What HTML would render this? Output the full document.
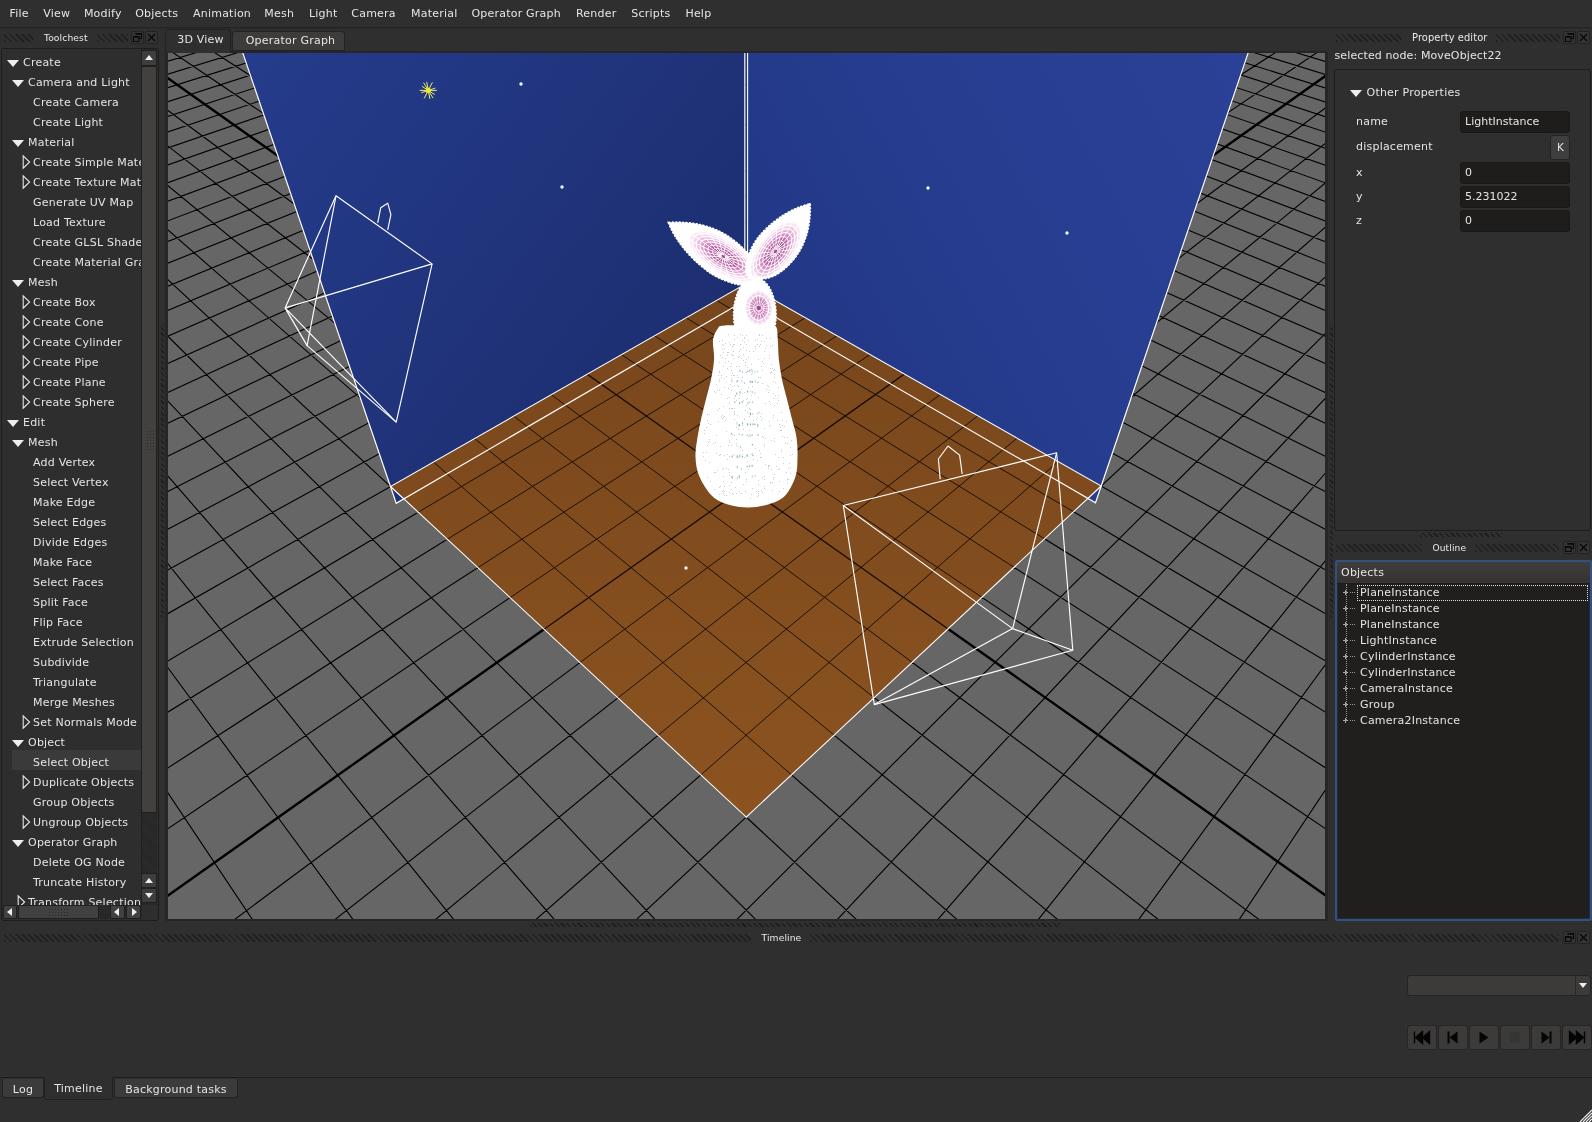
<!DOCTYPE html><html><head><meta charset="utf-8"><title>3D Editor</title><style>
*{box-sizing:border-box;margin:0;padding:0}
html,body{width:1592px;height:1122px;overflow:hidden;background:#2f2f2f}
#app{position:absolute;left:0;top:0;width:1592px;height:1122px;will-change:transform}
body{font-family:"DejaVu Sans","Liberation Sans",sans-serif;font-size:11px;color:#e4e4e4;position:relative;letter-spacing:.22px;-webkit-font-smoothing:antialiased}
.abs{position:absolute}
.t{position:absolute;white-space:pre;line-height:14px;height:14px}
.menubar{position:absolute;left:0;top:0;width:1592px;height:28px;background:#2f2f2f;border-bottom:1px solid #242424;box-shadow:0 2px 0 -1px #2a2a2a}
.menubar span{position:absolute;top:7px;line-height:14px;white-space:pre}
.hatch{position:absolute;height:7.5px;background:repeating-linear-gradient(45deg,#212121 0 2px,transparent 2px 4.3px);opacity:.95}
.title{position:absolute;font-size:9px;letter-spacing:.1px;line-height:12px;white-space:pre;color:#e8e8e8}
.tb{position:absolute;width:13px;height:13px;border:1px solid #222;border-radius:2px;background:#343434}
.tb svg{position:absolute;left:0;top:0}
.frame{position:absolute;border:1px solid #1d1d1d;border-radius:3px;background:#2e2e2e}
.tree{position:absolute;left:2px;top:49px;width:139px;height:856px;overflow:hidden;background:#2e2e2e}
.tree .r{position:absolute;left:0;width:200px;height:20px;line-height:20px;white-space:pre}
.tree .r b{font-weight:normal;position:absolute;top:0}
.arrD{position:absolute;width:0;height:0;border-left:6.5px solid transparent;border-right:6.5px solid transparent;border-top:7px solid #eee}
.sbtn{position:absolute;background:#434140;border:1px solid #1f1f1f;border-radius:2px}
.field{position:absolute;left:1460px;width:110px;height:22px;background:#1f1d1c;border:1px solid #1a1817;border-radius:3px;line-height:19px;padding-left:4px;white-space:pre;letter-spacing:0}
.tab{position:absolute;border:1px solid #222;border-radius:3px 3px 0 0;background:#3b3b3b;white-space:pre;text-align:center}
.mbtn{position:absolute;top:1024.5px;width:30px;height:25px;background:#3d3b3a;border:1px solid #262626;border-radius:3px}
.vp{position:absolute;left:168px;top:53px;display:block}
.oi{position:absolute;left:1360px;line-height:16px;height:16px;white-space:pre}
</style></head><body><div id="app">
<div class="menubar"><span style="left:9.5px">File</span><span style="left:43.2px">View</span><span style="left:83.9px">Modify</span><span style="left:135.2px">Objects</span><span style="left:193.0px">Animation</span><span style="left:264.3px">Mesh</span><span style="left:309.0px">Light</span><span style="left:351.3px">Camera</span><span style="left:411.0px">Material</span><span style="left:471.4px">Operator Graph</span><span style="left:575.9px">Render</span><span style="left:631.2px">Scripts</span><span style="left:685.4px">Help</span></div>
<div class="hatch" style="left:4px;top:34px;width:30px"></div><div class="hatch" style="left:97px;top:34px;width:31px"></div><div class="title" style="left:44.0px;top:32px;font-size:9.2px">Toolchest</div><div class="tb" style="left:130.5px;top:30.5px"><svg width="11" height="11" viewBox="0 0 11 11"><path d="M3.5 1.5h6v5h-2.5M1.5 4.5h5.5v5h-5.5z" fill="none" stroke="#0a0a0a" stroke-width="1.2"/><path d="M3.5 2h6M1.5 5h5.5" stroke="#0a0a0a" stroke-width="1.6"/></svg></div><div class="tb" style="left:144.5px;top:30.5px"><svg width="11" height="11" viewBox="0 0 11 11"><path d="M2 2l7 7M9 2l-7 7" stroke="#0a0a0a" stroke-width="1.5"/></svg></div>
<div class="frame" style="left:1px;top:48px;width:158px;height:873px"></div>
<div class="tree">
<div class="r" style="top:4px"><i class="arrD" style="left:5px;top:7px"></i><b style="left:21px">Create</b></div>
<div class="r" style="top:24px"><i class="arrD" style="left:10px;top:7px"></i><b style="left:26px">Camera and Light</b></div>
<div class="r" style="top:44px"><b style="left:31px">Create Camera</b></div>
<div class="r" style="top:64px"><b style="left:31px">Create Light</b></div>
<div class="r" style="top:84px"><i class="arrD" style="left:10px;top:7px"></i><b style="left:26px">Material</b></div>
<div class="r" style="top:104px"><svg style="position:absolute;left:19px;top:1px" width="10" height="16" viewBox="0 0 10 16"><path d="M2.2 1.8L8.6 8 2.2 14.2z" fill="none" stroke="#eee" stroke-width="1.05"/></svg><b style="left:31px">Create Simple Material</b></div>
<div class="r" style="top:124px"><svg style="position:absolute;left:19px;top:1px" width="10" height="16" viewBox="0 0 10 16"><path d="M2.2 1.8L8.6 8 2.2 14.2z" fill="none" stroke="#eee" stroke-width="1.05"/></svg><b style="left:31px">Create Texture Material</b></div>
<div class="r" style="top:144px"><b style="left:31px">Generate UV Map</b></div>
<div class="r" style="top:164px"><b style="left:31px">Load Texture</b></div>
<div class="r" style="top:184px"><b style="left:31px">Create GLSL Shader</b></div>
<div class="r" style="top:204px"><b style="left:31px">Create Material Graph</b></div>
<div class="r" style="top:224px"><i class="arrD" style="left:10px;top:7px"></i><b style="left:26px">Mesh</b></div>
<div class="r" style="top:244px"><svg style="position:absolute;left:19px;top:1px" width="10" height="16" viewBox="0 0 10 16"><path d="M2.2 1.8L8.6 8 2.2 14.2z" fill="none" stroke="#eee" stroke-width="1.05"/></svg><b style="left:31px">Create Box</b></div>
<div class="r" style="top:264px"><svg style="position:absolute;left:19px;top:1px" width="10" height="16" viewBox="0 0 10 16"><path d="M2.2 1.8L8.6 8 2.2 14.2z" fill="none" stroke="#eee" stroke-width="1.05"/></svg><b style="left:31px">Create Cone</b></div>
<div class="r" style="top:284px"><svg style="position:absolute;left:19px;top:1px" width="10" height="16" viewBox="0 0 10 16"><path d="M2.2 1.8L8.6 8 2.2 14.2z" fill="none" stroke="#eee" stroke-width="1.05"/></svg><b style="left:31px">Create Cylinder</b></div>
<div class="r" style="top:304px"><svg style="position:absolute;left:19px;top:1px" width="10" height="16" viewBox="0 0 10 16"><path d="M2.2 1.8L8.6 8 2.2 14.2z" fill="none" stroke="#eee" stroke-width="1.05"/></svg><b style="left:31px">Create Pipe</b></div>
<div class="r" style="top:324px"><svg style="position:absolute;left:19px;top:1px" width="10" height="16" viewBox="0 0 10 16"><path d="M2.2 1.8L8.6 8 2.2 14.2z" fill="none" stroke="#eee" stroke-width="1.05"/></svg><b style="left:31px">Create Plane</b></div>
<div class="r" style="top:344px"><svg style="position:absolute;left:19px;top:1px" width="10" height="16" viewBox="0 0 10 16"><path d="M2.2 1.8L8.6 8 2.2 14.2z" fill="none" stroke="#eee" stroke-width="1.05"/></svg><b style="left:31px">Create Sphere</b></div>
<div class="r" style="top:364px"><i class="arrD" style="left:5px;top:7px"></i><b style="left:21px">Edit</b></div>
<div class="r" style="top:384px"><i class="arrD" style="left:10px;top:7px"></i><b style="left:26px">Mesh</b></div>
<div class="r" style="top:404px"><b style="left:31px">Add Vertex</b></div>
<div class="r" style="top:424px"><b style="left:31px">Select Vertex</b></div>
<div class="r" style="top:444px"><b style="left:31px">Make Edge</b></div>
<div class="r" style="top:464px"><b style="left:31px">Select Edges</b></div>
<div class="r" style="top:484px"><b style="left:31px">Divide Edges</b></div>
<div class="r" style="top:504px"><b style="left:31px">Make Face</b></div>
<div class="r" style="top:524px"><b style="left:31px">Select Faces</b></div>
<div class="r" style="top:544px"><b style="left:31px">Split Face</b></div>
<div class="r" style="top:564px"><b style="left:31px">Flip Face</b></div>
<div class="r" style="top:584px"><b style="left:31px">Extrude Selection</b></div>
<div class="r" style="top:604px"><b style="left:31px">Subdivide</b></div>
<div class="r" style="top:624px"><b style="left:31px">Triangulate</b></div>
<div class="r" style="top:644px"><b style="left:31px">Merge Meshes</b></div>
<div class="r" style="top:664px"><svg style="position:absolute;left:19px;top:1px" width="10" height="16" viewBox="0 0 10 16"><path d="M2.2 1.8L8.6 8 2.2 14.2z" fill="none" stroke="#eee" stroke-width="1.05"/></svg><b style="left:31px">Set Normals Mode</b></div>
<div class="r" style="top:684px"><i class="arrD" style="left:10px;top:7px"></i><b style="left:26px">Object</b></div>
<div class="abs" style="left:10px;top:701px;width:129px;height:20px;background:#3a3a3a"></div><div class="r" style="top:704px"><b style="left:31px">Select Object</b></div>
<div class="r" style="top:724px"><svg style="position:absolute;left:19px;top:1px" width="10" height="16" viewBox="0 0 10 16"><path d="M2.2 1.8L8.6 8 2.2 14.2z" fill="none" stroke="#eee" stroke-width="1.05"/></svg><b style="left:31px">Duplicate Objects</b></div>
<div class="r" style="top:744px"><b style="left:31px">Group Objects</b></div>
<div class="r" style="top:764px"><svg style="position:absolute;left:19px;top:1px" width="10" height="16" viewBox="0 0 10 16"><path d="M2.2 1.8L8.6 8 2.2 14.2z" fill="none" stroke="#eee" stroke-width="1.05"/></svg><b style="left:31px">Ungroup Objects</b></div>
<div class="r" style="top:784px"><i class="arrD" style="left:10px;top:7px"></i><b style="left:26px">Operator Graph</b></div>
<div class="r" style="top:804px"><b style="left:31px">Delete OG Node</b></div>
<div class="r" style="top:824px"><b style="left:31px">Truncate History</b></div>
<div class="r" style="top:844px"><svg style="position:absolute;left:14px;top:1px" width="10" height="16" viewBox="0 0 10 16"><path d="M2.2 1.8L8.6 8 2.2 14.2z" fill="none" stroke="#eee" stroke-width="1.05"/></svg><b style="left:26px">Transform Selection</b></div>
</div>
<div class="abs" style="left:141px;top:49px;width:16px;height:856px;background:repeating-linear-gradient(45deg,#262626 0 1px,#2b2b2b 1px 2px);border-left:1px solid #1f1f1f"></div>
<div class="sbtn" style="left:141px;top:50px;width:16px;height:16px;background:#403e3d"><i class="abs" style="left:3px;top:4px;border-left:4px solid transparent;border-right:4px solid transparent;border-bottom:5px solid #eee"></i></div>
<div class="sbtn" style="left:141px;top:66px;width:16px;height:747px;background:#434140"></div>
<div class="abs" style="left:146px;top:430px;width:8px;height:20px;background:radial-gradient(circle,#2a2a2a 0.8px,transparent 1px) 0 0/3px 3px"></div>
<div class="sbtn" style="left:141px;top:873px;width:16px;height:15px;background:#403e3d"><i class="abs" style="left:3px;top:4px;border-left:4px solid transparent;border-right:4px solid transparent;border-bottom:5px solid #eee"></i></div>
<div class="sbtn" style="left:141px;top:888px;width:16px;height:15px;background:#403e3d"><i class="abs" style="left:3px;top:4px;border-left:4px solid transparent;border-right:4px solid transparent;border-top:5px solid #eee"></i></div>
<div class="abs" style="left:2px;top:905px;width:140px;height:14px;background:repeating-linear-gradient(45deg,#262626 0 1px,#2b2b2b 1px 2px)"></div>
<div class="sbtn" style="left:3px;top:905px;width:14px;height:14px"><i class="abs" style="left:3px;top:2px;border-top:4px solid transparent;border-bottom:4px solid transparent;border-right:5px solid #eee"></i></div>
<div class="sbtn" style="left:18px;top:905px;width:81px;height:14px;background:#434140"></div>
<div class="abs" style="left:48px;top:908px;width:20px;height:8px;background:radial-gradient(circle,#2a2a2a 0.8px,transparent 1px) 0 0/3px 3px"></div>
<div class="sbtn" style="left:110px;top:905px;width:15px;height:14px"><i class="abs" style="left:3px;top:2px;border-top:4px solid transparent;border-bottom:4px solid transparent;border-right:5px solid #eee"></i></div>
<div class="sbtn" style="left:126px;top:905px;width:15px;height:14px"><i class="abs" style="left:5px;top:2px;border-top:4px solid transparent;border-bottom:4px solid transparent;border-left:5px solid #eee"></i></div>
<div class="abs" style="left:160.5px;top:324px;width:3.5px;height:293px;background:repeating-linear-gradient(45deg,#1f1f1f 0 1.6px,transparent 1.6px 4px)"></div>
<div class="abs" style="left:1329.8px;top:324px;width:3.5px;height:293px;background:repeating-linear-gradient(45deg,#1f1f1f 0 1.6px,transparent 1.6px 4px)"></div>
<div class="abs" style="left:165px;top:51px;width:1163px;height:870px;background:#262626;border-radius:2px"></div>
<div class="tab" style="left:165px;top:29px;width:66px;height:24px;background:#2f2f2f;border-bottom:none;line-height:19px;padding-left:5px">3D View</div>
<div class="tab" style="left:232px;top:31px;width:113px;height:20px;line-height:17px;padding-left:4px;background:#3e3c3a">Operator Graph</div>
<svg class="vp" width="1157" height="866" viewBox="0 0 1157 866">
<defs>
<linearGradient id="gl" gradientUnits="userSpaceOnUse" x1="80" y1="0" x2="520" y2="330"><stop offset="0" stop-color="#253c8c"/><stop offset="1" stop-color="#1d2e70"/></linearGradient>
<linearGradient id="gr" gradientUnits="userSpaceOnUse" x1="1080" y1="0" x2="600" y2="260"><stop offset="0" stop-color="#2a4197"/><stop offset="0.55" stop-color="#273d90"/><stop offset="1" stop-color="#223785"/></linearGradient>
<linearGradient id="gf" gradientUnits="userSpaceOnUse" x1="0" y1="230" x2="0" y2="765"><stop offset="0" stop-color="#77461c"/><stop offset="1" stop-color="#8c5320"/></linearGradient>
<radialGradient id="gp" cx="0.5" cy="0.5" r="0.5"><stop offset="0" stop-color="#a04088"/><stop offset="0.28" stop-color="#ac4e96"/><stop offset="0.5" stop-color="#d68cc3"/><stop offset="0.74" stop-color="#f3d0e9"/><stop offset="0.95" stop-color="#fff"/></radialGradient>
<clipPath id="cf"><polygon points="578.2,764.1 222.5,433.5 577.7,230.8 933.2,433.0"/></clipPath>
</defs>
<rect width="1157" height="866" fill="#666"/>
<path d="M577.3 -280.9L-2627.2 435.5M577.3 -280.9L3769.2 431.0M588.6 -278.3L-2669.8 461.4M566.0 -278.3L3811.5 456.7M600.1 -275.8L-2714.6 488.5M554.5 -275.8L3856.0 483.6M611.8 -273.2L-2761.7 517.1M542.9 -273.2L3902.7 512.0M623.6 -270.5L-2811.3 547.1M531.0 -270.5L3951.9 541.8M635.7 -267.8L-2863.7 578.8M519.0 -267.8L4003.8 573.3M647.9 -265.1L-2919.0 612.3M506.8 -265.1L4058.6 606.6M660.3 -262.4L-2977.4 647.8M494.3 -262.3L4116.6 641.8M672.9 -259.5L-3039.4 685.3M481.7 -259.5L4178.1 679.0M685.8 -256.7L-3105.2 725.2M468.9 -256.6L4243.3 718.6M698.8 -253.8L-3175.2 767.6M455.8 -253.7L4312.6 760.6M712.1 -250.8L-3249.7 812.8M442.6 -250.7L4386.5 805.5M725.5 -247.8L-3329.3 861.0M429.1 -247.7L4465.4 853.3M739.2 -244.7L-3414.5 912.7M415.4 -244.7L4549.7 904.5M753.2 -241.6L-3505.9 968.0M401.5 -241.6L4640.2 959.4M767.4 -238.5L-3604.2 1027.6M387.3 -238.4L4737.5 1018.4M781.8 -235.3L-3710.2 1091.8M372.9 -235.2L4842.4 1082.0M796.4 -232.0L-3824.8 1161.3M358.2 -231.9L4955.9 1150.8M811.4 -228.7L-3949.3 1236.7M343.3 -228.5L5078.9 1225.5M826.6 -225.3L-4084.7 1318.8M328.1 -225.1L5212.8 1306.7M842.0 -221.8L-4232.8 1408.5M312.6 -221.7L5359.2 1395.5M857.8 -218.3L-4094.9 1408.3M296.8 -218.2L5223.0 1395.7M873.8 -214.7L-3957.0 1408.1M280.8 -214.6L5086.8 1395.8M890.2 -211.1L-3819.1 1408.0M264.4 -210.9L4950.6 1396.0M906.8 -207.4L-3681.3 1407.8M247.8 -207.2L4814.4 1396.2M923.7 -203.6L-3543.5 1407.6M230.8 -203.4L4678.1 1396.4M941.0 -199.7L-3405.7 1407.4M213.6 -199.5L4541.9 1396.6M958.6 -195.8L-3268.0 1407.2M196.0 -195.6L4405.5 1396.8M976.5 -191.8L-3130.2 1407.0M178.0 -191.6L4269.2 1397.0M994.8 -187.7L-2992.5 1406.8M159.7 -187.5L4132.9 1397.1M1013.5 -183.6L-2854.9 1406.6M141.1 -183.3L3996.5 1397.3M1032.5 -179.3L-2717.2 1406.5M122.0 -179.1L3860.1 1397.5M1051.9 -175.0L-2579.6 1406.3M102.6 -174.7L3723.6 1397.7M1071.7 -170.6L-2442.0 1406.1M82.8 -170.3L3587.2 1397.9M1091.9 -166.1L-2304.4 1405.9M62.6 -165.8L3450.7 1398.1M1112.5 -161.5L-2166.9 1405.7M42.0 -161.2L3314.2 1398.3M1133.5 -156.8L-2029.3 1405.5M20.9 -156.5L3177.7 1398.4M1155.0 -152.0L-1891.8 1405.3M-0.6 -151.7L3041.1 1398.6M1177.0 -147.1L-1754.4 1405.2M-22.6 -146.7L2904.5 1398.8M1199.4 -142.1L-1616.9 1405.0M-45.0 -141.7L2767.9 1399.0M1222.3 -137.0L-1479.5 1404.8M-68.0 -136.6L2631.3 1399.2M1245.7 -131.8L-1342.1 1404.6M-91.4 -131.4L2494.6 1399.4M1269.6 -126.5L-1204.7 1404.4M-115.4 -126.0L2357.9 1399.6M1294.1 -121.0L-1067.4 1404.2M-139.9 -120.5L2221.2 1399.7M1319.1 -115.4L-930.1 1404.0M-165.0 -114.9L2084.5 1399.9M1371.0 -103.9L-655.5 1403.7M-216.9 -103.3L1811.0 1400.3M1397.8 -97.9L-518.3 1403.5M-243.8 -97.3L1674.1 1400.5M1425.3 -91.7L-381.1 1403.3M-271.3 -91.1L1537.3 1400.7M1453.4 -85.5L-243.9 1403.1M-299.5 -84.8L1400.4 1400.9M1482.2 -79.0L-106.7 1402.9M-328.4 -78.4L1263.6 1401.0M1511.8 -72.5L30.4 1402.7M-358.0 -71.8L1126.6 1401.2M1542.0 -65.7L167.6 1402.5M-388.3 -65.0L989.7 1401.4M1573.1 -58.8L304.6 1402.4M-419.4 -58.0L852.7 1401.6M1604.9 -51.7L441.7 1402.2M-451.4 -50.9L715.8 1401.8M1637.6 -44.4L578.7 1402.0M-484.1 -43.6L578.7 1402.0M1671.2 -36.9L715.8 1401.8M-517.7 -36.1L441.7 1402.2M1705.6 -29.2L852.7 1401.6M-552.3 -28.3L304.6 1402.4M1741.0 -21.3L989.7 1401.4M-587.8 -20.4L167.6 1402.5M1777.3 -13.2L1126.6 1401.2M-624.2 -12.3L30.4 1402.7M1814.7 -4.9L1263.6 1401.0M-661.7 -3.9L-106.7 1402.9M1853.1 3.7L1400.4 1400.9M-700.2 4.7L-243.9 1403.1M1892.6 12.5L1537.3 1400.7M-739.9 13.6L-381.1 1403.3M1933.3 21.6L1674.1 1400.5M-780.7 22.7L-518.3 1403.5M1975.2 30.9L1811.0 1400.3M-822.7 32.1L-655.5 1403.7M2018.3 40.5L1947.7 1400.1M-866.0 41.8L-792.8 1403.8M2062.8 50.4L2084.5 1399.9M-910.6 51.8L-930.1 1404.0M2108.6 60.7L2221.2 1399.7M-956.6 62.0L-1067.4 1404.2M2155.8 71.2L2357.9 1399.6M-1004.0 72.7L-1204.7 1404.4M2204.6 82.1L2494.6 1399.4M-1053.0 83.6L-1342.1 1404.6M2255.0 93.3L2631.3 1399.2M-1103.5 94.9L-1479.5 1404.8M2307.0 104.9L2767.9 1399.0M-1155.7 106.6L-1616.9 1405.0M2360.7 116.9L2904.5 1398.8M-1209.7 118.6L-1754.4 1405.2M2416.3 129.3L3041.1 1398.6M-1265.6 131.1L-1891.8 1405.3M2473.8 142.1L3177.7 1398.4M-1323.3 144.0L-2029.3 1405.5M2533.3 155.4L3314.2 1398.3M-1383.2 157.4L-2166.9 1405.7M2595.0 169.1L3450.7 1398.1M-1445.2 171.3L-2304.4 1405.9M2659.0 183.4L3587.2 1397.9M-1509.4 185.6L-2442.0 1406.1M2725.3 198.2L3723.6 1397.7M-1576.1 200.6L-2579.6 1406.3M2794.1 213.5L3860.1 1397.5M-1645.3 216.0L-2717.2 1406.5M2865.6 229.5L3996.5 1397.3M-1717.2 232.1L-2854.9 1406.6M2939.9 246.1L4132.9 1397.1M-1792.0 248.8L-2992.5 1406.8M3017.2 263.3L4269.2 1397.0M-1869.8 266.2L-3130.2 1407.0M3097.7 281.3L4405.5 1396.8M-1950.7 284.3L-3268.0 1407.2M3181.6 300.0L4541.9 1396.6M-2035.2 303.2L-3405.7 1407.4M3269.0 319.5L4678.1 1396.4M-2123.2 322.9L-3543.5 1407.6M3360.3 339.8L4814.4 1396.2M-2215.1 343.4L-3681.3 1407.8M3455.7 361.1L4950.6 1396.0M-2311.2 364.9L-3819.1 1408.0M3555.4 383.3L5086.8 1395.8M-2411.7 387.4L-3957.0 1408.1M3659.8 406.6L5223.0 1395.7M-2516.9 410.9L-4094.9 1408.3M3769.2 431.0L5359.2 1395.5M-2627.2 435.5L-4232.8 1408.5" stroke="#000" stroke-width="1.12" fill="none"/>
<path d="M1344.8 -109.7L-792.8 1403.8M-190.6 -109.2L1947.7 1400.1" stroke="#000" stroke-width="2.4" fill="none"/>
<polygon points="578.2,764.1 222.5,433.5 577.7,230.8 933.2,433.0" fill="url(#gf)"/>
<g clip-path="url(#cf)"><path d="M577.3 -280.9L-2627.2 435.5M577.3 -280.9L3769.2 431.0M588.6 -278.3L-2669.8 461.4M566.0 -278.3L3811.5 456.7M600.1 -275.8L-2714.6 488.5M554.5 -275.8L3856.0 483.6M611.8 -273.2L-2761.7 517.1M542.9 -273.2L3902.7 512.0M623.6 -270.5L-2811.3 547.1M531.0 -270.5L3951.9 541.8M635.7 -267.8L-2863.7 578.8M519.0 -267.8L4003.8 573.3M647.9 -265.1L-2919.0 612.3M506.8 -265.1L4058.6 606.6M660.3 -262.4L-2977.4 647.8M494.3 -262.3L4116.6 641.8M672.9 -259.5L-3039.4 685.3M481.7 -259.5L4178.1 679.0M685.8 -256.7L-3105.2 725.2M468.9 -256.6L4243.3 718.6M698.8 -253.8L-3175.2 767.6M455.8 -253.7L4312.6 760.6M712.1 -250.8L-3249.7 812.8M442.6 -250.7L4386.5 805.5M725.5 -247.8L-3329.3 861.0M429.1 -247.7L4465.4 853.3M739.2 -244.7L-3414.5 912.7M415.4 -244.7L4549.7 904.5M753.2 -241.6L-3505.9 968.0M401.5 -241.6L4640.2 959.4M767.4 -238.5L-3604.2 1027.6M387.3 -238.4L4737.5 1018.4M781.8 -235.3L-3710.2 1091.8M372.9 -235.2L4842.4 1082.0M796.4 -232.0L-3824.8 1161.3M358.2 -231.9L4955.9 1150.8M811.4 -228.7L-3949.3 1236.7M343.3 -228.5L5078.9 1225.5M826.6 -225.3L-4084.7 1318.8M328.1 -225.1L5212.8 1306.7M842.0 -221.8L-4232.8 1408.5M312.6 -221.7L5359.2 1395.5M857.8 -218.3L-4094.9 1408.3M296.8 -218.2L5223.0 1395.7M873.8 -214.7L-3957.0 1408.1M280.8 -214.6L5086.8 1395.8M890.2 -211.1L-3819.1 1408.0M264.4 -210.9L4950.6 1396.0M906.8 -207.4L-3681.3 1407.8M247.8 -207.2L4814.4 1396.2M923.7 -203.6L-3543.5 1407.6M230.8 -203.4L4678.1 1396.4M941.0 -199.7L-3405.7 1407.4M213.6 -199.5L4541.9 1396.6M958.6 -195.8L-3268.0 1407.2M196.0 -195.6L4405.5 1396.8M976.5 -191.8L-3130.2 1407.0M178.0 -191.6L4269.2 1397.0M994.8 -187.7L-2992.5 1406.8M159.7 -187.5L4132.9 1397.1M1013.5 -183.6L-2854.9 1406.6M141.1 -183.3L3996.5 1397.3M1032.5 -179.3L-2717.2 1406.5M122.0 -179.1L3860.1 1397.5M1051.9 -175.0L-2579.6 1406.3M102.6 -174.7L3723.6 1397.7M1071.7 -170.6L-2442.0 1406.1M82.8 -170.3L3587.2 1397.9M1091.9 -166.1L-2304.4 1405.9M62.6 -165.8L3450.7 1398.1M1112.5 -161.5L-2166.9 1405.7M42.0 -161.2L3314.2 1398.3M1133.5 -156.8L-2029.3 1405.5M20.9 -156.5L3177.7 1398.4M1155.0 -152.0L-1891.8 1405.3M-0.6 -151.7L3041.1 1398.6M1177.0 -147.1L-1754.4 1405.2M-22.6 -146.7L2904.5 1398.8M1199.4 -142.1L-1616.9 1405.0M-45.0 -141.7L2767.9 1399.0M1222.3 -137.0L-1479.5 1404.8M-68.0 -136.6L2631.3 1399.2M1245.7 -131.8L-1342.1 1404.6M-91.4 -131.4L2494.6 1399.4M1269.6 -126.5L-1204.7 1404.4M-115.4 -126.0L2357.9 1399.6M1294.1 -121.0L-1067.4 1404.2M-139.9 -120.5L2221.2 1399.7M1319.1 -115.4L-930.1 1404.0M-165.0 -114.9L2084.5 1399.9M1371.0 -103.9L-655.5 1403.7M-216.9 -103.3L1811.0 1400.3M1397.8 -97.9L-518.3 1403.5M-243.8 -97.3L1674.1 1400.5M1425.3 -91.7L-381.1 1403.3M-271.3 -91.1L1537.3 1400.7M1453.4 -85.5L-243.9 1403.1M-299.5 -84.8L1400.4 1400.9M1482.2 -79.0L-106.7 1402.9M-328.4 -78.4L1263.6 1401.0M1511.8 -72.5L30.4 1402.7M-358.0 -71.8L1126.6 1401.2M1542.0 -65.7L167.6 1402.5M-388.3 -65.0L989.7 1401.4M1573.1 -58.8L304.6 1402.4M-419.4 -58.0L852.7 1401.6M1604.9 -51.7L441.7 1402.2M-451.4 -50.9L715.8 1401.8M1637.6 -44.4L578.7 1402.0M-484.1 -43.6L578.7 1402.0M1671.2 -36.9L715.8 1401.8M-517.7 -36.1L441.7 1402.2M1705.6 -29.2L852.7 1401.6M-552.3 -28.3L304.6 1402.4M1741.0 -21.3L989.7 1401.4M-587.8 -20.4L167.6 1402.5M1777.3 -13.2L1126.6 1401.2M-624.2 -12.3L30.4 1402.7M1814.7 -4.9L1263.6 1401.0M-661.7 -3.9L-106.7 1402.9M1853.1 3.7L1400.4 1400.9M-700.2 4.7L-243.9 1403.1M1892.6 12.5L1537.3 1400.7M-739.9 13.6L-381.1 1403.3M1933.3 21.6L1674.1 1400.5M-780.7 22.7L-518.3 1403.5M1975.2 30.9L1811.0 1400.3M-822.7 32.1L-655.5 1403.7M2018.3 40.5L1947.7 1400.1M-866.0 41.8L-792.8 1403.8M2062.8 50.4L2084.5 1399.9M-910.6 51.8L-930.1 1404.0M2108.6 60.7L2221.2 1399.7M-956.6 62.0L-1067.4 1404.2M2155.8 71.2L2357.9 1399.6M-1004.0 72.7L-1204.7 1404.4M2204.6 82.1L2494.6 1399.4M-1053.0 83.6L-1342.1 1404.6M2255.0 93.3L2631.3 1399.2M-1103.5 94.9L-1479.5 1404.8M2307.0 104.9L2767.9 1399.0M-1155.7 106.6L-1616.9 1405.0M2360.7 116.9L2904.5 1398.8M-1209.7 118.6L-1754.4 1405.2M2416.3 129.3L3041.1 1398.6M-1265.6 131.1L-1891.8 1405.3M2473.8 142.1L3177.7 1398.4M-1323.3 144.0L-2029.3 1405.5M2533.3 155.4L3314.2 1398.3M-1383.2 157.4L-2166.9 1405.7M2595.0 169.1L3450.7 1398.1M-1445.2 171.3L-2304.4 1405.9M2659.0 183.4L3587.2 1397.9M-1509.4 185.6L-2442.0 1406.1M2725.3 198.2L3723.6 1397.7M-1576.1 200.6L-2579.6 1406.3M2794.1 213.5L3860.1 1397.5M-1645.3 216.0L-2717.2 1406.5M2865.6 229.5L3996.5 1397.3M-1717.2 232.1L-2854.9 1406.6M2939.9 246.1L4132.9 1397.1M-1792.0 248.8L-2992.5 1406.8M3017.2 263.3L4269.2 1397.0M-1869.8 266.2L-3130.2 1407.0M3097.7 281.3L4405.5 1396.8M-1950.7 284.3L-3268.0 1407.2M3181.6 300.0L4541.9 1396.6M-2035.2 303.2L-3405.7 1407.4M3269.0 319.5L4678.1 1396.4M-2123.2 322.9L-3543.5 1407.6M3360.3 339.8L4814.4 1396.2M-2215.1 343.4L-3681.3 1407.8M3455.7 361.1L4950.6 1396.0M-2311.2 364.9L-3819.1 1408.0M3555.4 383.3L5086.8 1395.8M-2411.7 387.4L-3957.0 1408.1M3659.8 406.6L5223.0 1395.7M-2516.9 410.9L-4094.9 1408.3M3769.2 431.0L5359.2 1395.5M-2627.2 435.5L-4232.8 1408.5" stroke="#100800" stroke-opacity="0.92" stroke-width="0.95" fill="none"/><path d="M1344.8 -109.7L-792.8 1403.8M-190.6 -109.2L1947.7 1400.1" stroke="#0c0500" stroke-opacity="0.9" stroke-width="1.35" fill="none"/></g>
<polygon points="-101.1,-516.4 577.3,-546.0 577.7,230.8 222.5,433.5" fill="url(#gl)"/>
<polygon points="1255.3,-516.4 577.3,-546.0 577.7,230.8 933.2,433.0" fill="url(#gr)"/>
<polygon points="222.5,433.5 228.2,450.3 235.8,445.9" fill="#1f3278"/>
<polygon points="933.2,433.0 927.5,449.8 919.9,445.4" fill="#263c8c"/>
<g fill="none" stroke="#fff" stroke-width="1.15">
<polygon points="578.2,764.1 222.5,433.5 577.7,230.8 933.2,433.0"/>
<polyline points="-101.1,-516.4 228.2,450.3 577.8,247.0"/>
<polyline points="1255.3,-516.4 927.5,449.8 577.8,247.0"/>
<path d="M576.8 0V247.0M579.6 0V247.0" stroke-width="1.1"/>
</g>
<g fill="none" stroke="#fff" stroke-width="1.15" stroke-linejoin="round"><polygon points="168.0,142.8 264.1,210.9 228.2,369.1 139.1,292.6"/><path d="M117.1 254.9 L168.0 142.8 M117.1 254.9 L264.1 210.9 M117.1 254.9 L228.2 369.1 M117.1 254.9 L139.1 292.6 "/><polyline points="209.7,169.9 212.7,154.8 219.7,150.2 222.9,161.7 219.7,176.8"/></g>
<g fill="none" stroke="#fff" stroke-width="1.15" stroke-linejoin="round"><polygon points="675.3,452.5 888.6,399.8 904.8,597.3 706.3,651.6"/><path d="M844.6 575.6 L675.3 452.5 M844.6 575.6 L888.6 399.8 M844.6 575.6 L904.8 597.3 M844.6 575.6 L706.3 651.6 "/><polyline points="772.2,426.1 770.4,406.0 780.0,393.0 791.6,402.1 794.2,421.0"/></g>
<path d="M251.7 37.4L268.9 37.4M253.9 33.3L266.7 41.5M255.6 29.7L265.0 45.1M258.7 28.9L261.9 45.9M264.4 29.4L256.2 45.4M267.3 35.1L253.3 39.7" stroke="#f6f46a" stroke-width="0.95" fill="none"/>
<circle cx="260.3" cy="37.4" r="2.6" fill="#efeb1c"/>
<circle cx="353.0" cy="31.0" r="1.7" fill="#f4f4ff"/>
<circle cx="394.0" cy="134.0" r="1.7" fill="#f4f4ff"/>
<circle cx="760.0" cy="135.0" r="1.7" fill="#f4f4ff"/>
<circle cx="899.0" cy="180.0" r="1.7" fill="#f4f4ff"/>
<circle cx="518.0" cy="515.0" r="1.7" fill="#f4f4ff"/>
<g transform="translate(586.8 261.8) rotate(90.0)"><clipPath id="lf1"><path d="M-36.5 0A36.5 20.5 0 1 1 36.5 0A36.5 20.5 0 1 1 -36.5 0Z"/></clipPath><path d="M-36.5 0A36.5 20.5 0 1 1 36.5 0A36.5 20.5 0 1 1 -36.5 0Z" fill="#fff" stroke="#fff" stroke-width="0.8" stroke-linejoin="round"/><g clip-path="url(#lf1)"><ellipse cx="-6.8" cy="-4.0" rx="19.0" ry="15.2" fill="url(#gp)"/><path d="M-4.6 -3.8L65.8 3.3M-4.8 -3.1L60.0 25.3M-5.2 -2.5L47.7 44.5M-5.7 -2.1L30.0 59.0M-6.3 -1.9L8.7 67.3M-7.0 -1.8L-14.1 68.6M-7.7 -2.0L-36.2 62.8M-8.3 -2.4L-55.4 50.4M-8.7 -2.9L-69.8 32.8M-8.9 -3.5L-78.1 11.5M-9.0 -4.2L-79.4 -11.3M-8.8 -4.9L-73.6 -33.3M-8.4 -5.5L-61.3 -52.5M-7.9 -5.9L-43.6 -67.0M-7.3 -6.1L-22.3 -75.3M-6.6 -6.2L0.5 -76.6M-5.9 -6.0L22.6 -70.8M-5.3 -5.6L41.8 -58.4M-4.9 -5.1L56.2 -40.8M-4.7 -4.5L64.5 -19.5" stroke="#fff" stroke-width="0.85" fill="none"/><ellipse cx="-6.8" cy="-4.0" rx="6.5" ry="5.2" fill="none" stroke="#fff" stroke-width="0.81"/><ellipse cx="-6.8" cy="-4.0" rx="12.4" ry="9.9" fill="none" stroke="#fff" stroke-width="1.09"/><ellipse cx="-6.8" cy="-4.0" rx="17.6" ry="14.1" fill="none" stroke="#fff" stroke-width="1.34"/></g><path d="M-36.5 0A36.5 20.5 0 1 1 36.5 0A36.5 20.5 0 1 1 -36.5 0Z" fill="none" stroke="#fff" stroke-width="3.2" stroke-linecap="round" stroke-dasharray="0.1 3.3"/></g>
<g transform="translate(544.2 197.3) rotate(32.4)"><clipPath id="lf2"><path d="M-50.7 0C-31.4 -14.0 -10.1 -21.1 11.2 -19.5S43.1 -11.7 50.7 0S27.9 19.9 11.2 19.5S-31.4 14.0 -50.7 0Z"/></clipPath><path d="M-50.7 0C-31.4 -14.0 -10.1 -21.1 11.2 -19.5S43.1 -11.7 50.7 0S27.9 19.9 11.2 19.5S-31.4 14.0 -50.7 0Z" fill="#fff" stroke="#fff" stroke-width="0.8" stroke-linejoin="round"/><g clip-path="url(#lf2)"><ellipse cx="12.7" cy="-0.7" rx="42.6" ry="18.5" fill="url(#gp)"/><path d="M14.9 -0.6L113.6 4.8M14.7 -0.2L105.5 21.5M14.3 0.1L88.4 36.0M13.8 0.3L63.8 46.9M13.2 0.4L34.2 53.2M12.5 0.5L2.6 54.1M11.8 0.4L-28.1 49.8M11.2 0.2L-54.8 40.4M10.8 -0.1L-74.9 27.1M10.5 -0.5L-86.4 11.0M10.5 -0.8L-88.2 -6.2M10.7 -1.2L-80.2 -22.9M11.1 -1.5L-63.0 -37.4M11.6 -1.8L-38.4 -48.3M12.2 -1.9L-8.9 -54.6M12.9 -1.9L22.8 -55.6M13.6 -1.8L53.5 -51.2M14.2 -1.6L80.2 -41.9M14.6 -1.3L100.3 -28.5M14.8 -1.0L111.8 -12.4" stroke="#fff" stroke-width="0.85" fill="none"/><ellipse cx="12.7" cy="-0.7" rx="6.5" ry="2.8" fill="none" stroke="#fff" stroke-width="0.64"/><ellipse cx="12.7" cy="-0.7" rx="12.4" ry="5.4" fill="none" stroke="#fff" stroke-width="0.76"/><ellipse cx="12.7" cy="-0.7" rx="17.6" ry="7.7" fill="none" stroke="#fff" stroke-width="0.87"/><ellipse cx="12.7" cy="-0.7" rx="22.4" ry="9.7" fill="none" stroke="#fff" stroke-width="0.97"/><ellipse cx="12.7" cy="-0.7" rx="26.6" ry="11.6" fill="none" stroke="#fff" stroke-width="1.06"/><ellipse cx="12.7" cy="-0.7" rx="30.8" ry="13.4" fill="none" stroke="#fff" stroke-width="1.15"/><ellipse cx="12.7" cy="-0.7" rx="35.0" ry="15.2" fill="none" stroke="#fff" stroke-width="1.24"/><ellipse cx="12.7" cy="-0.7" rx="39.2" ry="17.1" fill="none" stroke="#fff" stroke-width="1.33"/></g><path d="M-50.7 0C-31.4 -14.0 -10.1 -21.1 11.2 -19.5S43.1 -11.7 50.7 0S27.9 19.9 11.2 19.5S-31.4 14.0 -50.7 0Z" fill="none" stroke="#fff" stroke-width="3.2" stroke-linecap="round" stroke-dasharray="0.1 3.3"/></g>
<g transform="translate(613.3 188.3) rotate(127.7)"><clipPath id="lf3"><path d="M-46.3 0C-28.7 -14.4 -9.3 -21.6 10.2 -20.0S39.4 -12.0 46.3 0S25.5 20.4 10.2 20.0S-28.7 14.4 -46.3 0Z"/></clipPath><path d="M-46.3 0C-28.7 -14.4 -9.3 -21.6 10.2 -20.0S39.4 -12.0 46.3 0S25.5 20.4 10.2 20.0S-28.7 14.4 -46.3 0Z" fill="#fff" stroke="#fff" stroke-width="0.8" stroke-linejoin="round"/><g clip-path="url(#lf3)"><ellipse cx="11.6" cy="-1.6" rx="38.9" ry="19.0" fill="url(#gp)"/><path d="M13.8 -1.5L103.7 4.0M13.6 -1.1L96.4 21.1M13.2 -0.7L80.7 36.0M12.7 -0.5L58.3 47.2M12.0 -0.3L31.3 53.6M11.4 -0.3L2.3 54.7M10.7 -0.4L-25.7 50.2M10.1 -0.6L-50.1 40.6M9.7 -0.9L-68.4 26.9M9.4 -1.3L-78.9 10.4M9.4 -1.7L-80.6 -7.3M9.6 -2.2L-73.2 -24.4M9.9 -2.5L-57.5 -39.3M10.5 -2.8L-35.1 -50.5M11.1 -2.9L-8.1 -56.9M11.8 -2.9L20.8 -57.9M12.5 -2.8L48.8 -53.4M13.0 -2.6L73.2 -43.8M13.5 -2.3L91.6 -30.1M13.7 -1.9L102.1 -13.6" stroke="#fff" stroke-width="0.85" fill="none"/><ellipse cx="11.6" cy="-1.6" rx="6.5" ry="3.2" fill="none" stroke="#fff" stroke-width="0.65"/><ellipse cx="11.6" cy="-1.6" rx="12.4" ry="6.0" fill="none" stroke="#fff" stroke-width="0.79"/><ellipse cx="11.6" cy="-1.6" rx="17.6" ry="8.6" fill="none" stroke="#fff" stroke-width="0.91"/><ellipse cx="11.6" cy="-1.6" rx="22.4" ry="10.9" fill="none" stroke="#fff" stroke-width="1.02"/><ellipse cx="11.6" cy="-1.6" rx="26.6" ry="13.0" fill="none" stroke="#fff" stroke-width="1.12"/><ellipse cx="11.6" cy="-1.6" rx="30.8" ry="15.1" fill="none" stroke="#fff" stroke-width="1.21"/><ellipse cx="11.6" cy="-1.6" rx="35.0" ry="17.1" fill="none" stroke="#fff" stroke-width="1.31"/></g><path d="M-46.3 0C-28.7 -14.4 -9.3 -21.6 10.2 -20.0S39.4 -12.0 46.3 0S25.5 20.4 10.2 20.0S-28.7 14.4 -46.3 0Z" fill="none" stroke="#fff" stroke-width="3.2" stroke-linecap="round" stroke-dasharray="0.1 3.3"/></g>
<path d="M551.0 273.5C550.0 275.6 545.9 280.8 545.1 286.2C544.3 291.6 546.4 299.3 546.1 305.8C545.8 312.3 544.5 318.9 543.2 325.4C541.9 331.9 539.9 338.5 538.3 345.0C536.7 351.5 534.9 358.1 533.4 364.6C531.9 371.2 530.5 377.8 529.5 384.3C528.5 390.9 527.2 397.4 527.5 403.9C527.8 410.4 528.6 417.0 531.4 423.5C534.2 430.0 539.4 438.4 544.2 443.1C549.0 447.8 554.0 449.6 560.0 451.5C566.0 453.4 573.7 454.5 580.4 454.5C587.1 454.5 594.0 453.4 600.0 451.5C606.0 449.6 612.1 447.8 616.7 443.1C621.3 438.4 625.4 430.0 627.5 423.5C629.6 417.0 629.3 410.4 629.5 403.9C629.7 397.4 629.5 390.9 628.5 384.3C627.5 377.8 625.2 371.2 623.6 364.6C622.0 358.1 620.3 351.5 618.7 345.0C617.1 338.5 615.1 331.9 613.8 325.4C612.5 318.9 611.5 312.3 610.8 305.8C610.1 299.3 610.3 291.6 609.8 286.2C609.3 280.8 609.9 275.8 607.9 273.5C605.9 271.2 605.8 272.5 598.0 272.3C590.2 272.1 568.8 272.1 561.0 272.3C553.2 272.5 552.7 273.3 551.0 273.5Z" fill="#fff"/>
<g fill="#b9c6c9" opacity="0.8"><rect x="556" y="334" width="1" height="1"/><rect x="541" y="388" width="1" height="1"/><rect x="568" y="369" width="1" height="1"/><rect x="578" y="291" width="1" height="1"/><rect x="574" y="287" width="1" height="1"/><rect x="555" y="292" width="1" height="1"/><rect x="602" y="351" width="1" height="1"/><rect x="563" y="301" width="1" height="1"/><rect x="619" y="384" width="1" height="1"/><rect x="570" y="376" width="1" height="1"/><rect x="551" y="441" width="1" height="1"/><rect x="561" y="422" width="1" height="1"/><rect x="557" y="305" width="1" height="1"/><rect x="599" y="332" width="1" height="1"/><rect x="583" y="311" width="1" height="1"/><rect x="568" y="386" width="1" height="1"/><rect x="542" y="371" width="1" height="1"/><rect x="562" y="291" width="1" height="1"/><rect x="572" y="393" width="1" height="1"/><rect x="584" y="333" width="1" height="1"/><rect x="563" y="355" width="1" height="1"/><rect x="597" y="411" width="1" height="1"/><rect x="583" y="321" width="1" height="1"/><rect x="609" y="367" width="1" height="1"/><rect x="559" y="401" width="1" height="1"/><rect x="556" y="442" width="1" height="1"/><rect x="597" y="350" width="1" height="1"/><rect x="578" y="306" width="1" height="1"/><rect x="587" y="287" width="1" height="1"/><rect x="585" y="406" width="1" height="1"/><rect x="564" y="425" width="1" height="1"/><rect x="587" y="395" width="1" height="1"/><rect x="575" y="376" width="1" height="1"/><rect x="618" y="419" width="1" height="1"/><rect x="591" y="359" width="1" height="1"/><rect x="589" y="291" width="1" height="1"/><rect x="623" y="387" width="1" height="1"/><rect x="560" y="416" width="1" height="1"/><rect x="590" y="344" width="1" height="1"/><rect x="576" y="285" width="1" height="1"/><rect x="557" y="309" width="1" height="1"/><rect x="592" y="291" width="1" height="1"/><rect x="564" y="302" width="1" height="1"/><rect x="605" y="345" width="1" height="1"/><rect x="575" y="294" width="1" height="1"/><rect x="611" y="371" width="1" height="1"/><rect x="611" y="415" width="1" height="1"/><rect x="573" y="327" width="1" height="1"/><rect x="605" y="340" width="1" height="1"/><rect x="556" y="438" width="1" height="1"/><rect x="563" y="310" width="1" height="1"/><rect x="578" y="319" width="1" height="1"/><rect x="558" y="378" width="1" height="1"/><rect x="574" y="282" width="1" height="1"/><rect x="583" y="342" width="1" height="1"/><rect x="593" y="437" width="1" height="1"/><rect x="588" y="366" width="1" height="1"/><rect x="539" y="392" width="1" height="1"/><rect x="602" y="429" width="1" height="1"/><rect x="605" y="424" width="1" height="1"/><rect x="571" y="345" width="1" height="1"/><rect x="585" y="298" width="1" height="1"/><rect x="554" y="291" width="1" height="1"/><rect x="559" y="315" width="1" height="1"/><rect x="549" y="337" width="1" height="1"/><rect x="560" y="281" width="1" height="1"/><rect x="571" y="298" width="1" height="1"/><rect x="598" y="285" width="1" height="1"/><rect x="548" y="382" width="1" height="1"/><rect x="569" y="322" width="1" height="1"/><rect x="553" y="341" width="1" height="1"/><rect x="622" y="420" width="1" height="1"/><rect x="577" y="357" width="1" height="1"/><rect x="556" y="295" width="1" height="1"/><rect x="563" y="337" width="1" height="1"/><rect x="549" y="417" width="1" height="1"/><rect x="602" y="285" width="1" height="1"/><rect x="550" y="368" width="1" height="1"/><rect x="540" y="370" width="1" height="1"/><rect x="618" y="368" width="1" height="1"/><rect x="596" y="423" width="1" height="1"/><rect x="570" y="324" width="1" height="1"/><rect x="594" y="308" width="1" height="1"/><rect x="601" y="368" width="1" height="1"/><rect x="560" y="335" width="1" height="1"/><rect x="622" y="414" width="1" height="1"/><rect x="606" y="421" width="1" height="1"/><rect x="600" y="415" width="1" height="1"/><rect x="580" y="318" width="1" height="1"/><rect x="547" y="339" width="1" height="1"/><rect x="566" y="286" width="1" height="1"/><rect x="590" y="324" width="1" height="1"/><rect x="577" y="438" width="1" height="1"/><rect x="615" y="435" width="1" height="1"/><rect x="571" y="438" width="1" height="1"/><rect x="563" y="317" width="1" height="1"/><rect x="562" y="313" width="1" height="1"/><rect x="614" y="383" width="1" height="1"/><rect x="577" y="419" width="1" height="1"/><rect x="606" y="388" width="1" height="1"/><rect x="587" y="295" width="1" height="1"/><rect x="602" y="430" width="1" height="1"/><rect x="576" y="404" width="1" height="1"/><rect x="595" y="310" width="1" height="1"/><rect x="598" y="336" width="1" height="1"/><rect x="573" y="440" width="1" height="1"/><rect x="610" y="347" width="1" height="1"/><rect x="548" y="400" width="1" height="1"/><rect x="559" y="302" width="1" height="1"/><rect x="604" y="429" width="1" height="1"/><rect x="596" y="305" width="1" height="1"/><rect x="590" y="442" width="1" height="1"/><rect x="582" y="338" width="1" height="1"/><rect x="552" y="302" width="1" height="1"/><rect x="590" y="440" width="1" height="1"/><rect x="614" y="367" width="1" height="1"/><rect x="606" y="352" width="1" height="1"/><rect x="554" y="416" width="1" height="1"/><rect x="566" y="322" width="1" height="1"/><rect x="584" y="320" width="1" height="1"/><rect x="574" y="324" width="1" height="1"/><rect x="601" y="302" width="1" height="1"/><rect x="576" y="339" width="1" height="1"/><rect x="613" y="377" width="1" height="1"/><rect x="609" y="350" width="1" height="1"/><rect x="581" y="363" width="1" height="1"/><rect x="539" y="367" width="1" height="1"/><rect x="555" y="353" width="1" height="1"/><rect x="594" y="282" width="1" height="1"/><rect x="577" y="309" width="1" height="1"/><rect x="584" y="400" width="1" height="1"/><rect x="580" y="334" width="1" height="1"/><rect x="602" y="372" width="1" height="1"/><rect x="581" y="298" width="1" height="1"/><rect x="565" y="322" width="1" height="1"/><rect x="579" y="408" width="1" height="1"/><rect x="601" y="373" width="1" height="1"/><rect x="575" y="431" width="1" height="1"/><rect x="579" y="381" width="1" height="1"/><rect x="594" y="365" width="1" height="1"/><rect x="581" y="355" width="1" height="1"/><rect x="613" y="359" width="1" height="1"/><rect x="613" y="396" width="1" height="1"/><rect x="563" y="436" width="1" height="1"/><rect x="616" y="373" width="1" height="1"/><rect x="547" y="419" width="1" height="1"/><rect x="575" y="301" width="1" height="1"/><rect x="564" y="293" width="1" height="1"/><rect x="587" y="293" width="1" height="1"/><rect x="615" y="410" width="1" height="1"/><rect x="590" y="306" width="1" height="1"/><rect x="547" y="389" width="1" height="1"/><rect x="619" y="426" width="1" height="1"/><rect x="605" y="317" width="1" height="1"/><rect x="578" y="346" width="1" height="1"/><rect x="589" y="443" width="1" height="1"/><rect x="575" y="307" width="1" height="1"/><rect x="566" y="366" width="1" height="1"/><rect x="568" y="313" width="1" height="1"/><rect x="535" y="399" width="1" height="1"/><rect x="574" y="372" width="1" height="1"/><rect x="569" y="284" width="1" height="1"/><rect x="580" y="383" width="1" height="1"/><rect x="604" y="292" width="1" height="1"/><rect x="621" y="410" width="1" height="1"/><rect x="565" y="298" width="1" height="1"/><rect x="593" y="287" width="1" height="1"/><rect x="556" y="325" width="1" height="1"/><rect x="609" y="350" width="1" height="1"/><rect x="558" y="415" width="1" height="1"/><rect x="601" y="305" width="1" height="1"/><rect x="596" y="375" width="1" height="1"/><rect x="554" y="296" width="1" height="1"/><rect x="572" y="394" width="1" height="1"/><rect x="602" y="293" width="1" height="1"/><rect x="606" y="385" width="1" height="1"/><rect x="597" y="295" width="1" height="1"/><rect x="598" y="292" width="1" height="1"/><rect x="566" y="355" width="1" height="1"/><rect x="614" y="372" width="1" height="1"/><rect x="556" y="325" width="1" height="1"/><rect x="557" y="367" width="1" height="1"/><rect x="560" y="299" width="1" height="1"/><rect x="561" y="289" width="1" height="1"/><rect x="566" y="332" width="1" height="1"/><rect x="559" y="406" width="1" height="1"/><rect x="553" y="363" width="1" height="1"/><rect x="546" y="338" width="1" height="1"/><rect x="550" y="322" width="1" height="1"/><rect x="583" y="401" width="1" height="1"/><rect x="577" y="312" width="1" height="1"/><rect x="551" y="434" width="1" height="1"/><rect x="573" y="415" width="1" height="1"/><rect x="605" y="362" width="1" height="1"/><rect x="579" y="345" width="1" height="1"/><rect x="622" y="394" width="1" height="1"/><rect x="601" y="337" width="1" height="1"/><rect x="591" y="397" width="1" height="1"/><rect x="568" y="347" width="1" height="1"/><rect x="557" y="290" width="1" height="1"/><rect x="591" y="293" width="1" height="1"/><rect x="558" y="323" width="1" height="1"/><rect x="597" y="295" width="1" height="1"/><rect x="594" y="424" width="1" height="1"/><rect x="563" y="327" width="1" height="1"/><rect x="576" y="329" width="1" height="1"/><rect x="575" y="307" width="1" height="1"/><rect x="606" y="324" width="1" height="1"/><rect x="583" y="441" width="1" height="1"/><rect x="606" y="321" width="1" height="1"/><rect x="569" y="332" width="1" height="1"/><rect x="572" y="281" width="1" height="1"/><rect x="579" y="359" width="1" height="1"/><rect x="579" y="314" width="1" height="1"/><rect x="566" y="282" width="1" height="1"/><rect x="572" y="296" width="1" height="1"/><rect x="551" y="288" width="1" height="1"/><rect x="562" y="331" width="1" height="1"/><rect x="581" y="377" width="1" height="1"/><rect x="593" y="404" width="1" height="1"/><rect x="613" y="398" width="1" height="1"/><rect x="566" y="345" width="1" height="1"/><rect x="558" y="442" width="1" height="1"/><rect x="592" y="400" width="1" height="1"/><rect x="596" y="288" width="1" height="1"/><rect x="590" y="427" width="1" height="1"/><rect x="607" y="401" width="1" height="1"/><rect x="580" y="304" width="1" height="1"/><rect x="605" y="364" width="1" height="1"/><rect x="608" y="413" width="1" height="1"/><rect x="612" y="377" width="1" height="1"/><rect x="596" y="393" width="1" height="1"/><rect x="551" y="319" width="1" height="1"/><rect x="571" y="303" width="1" height="1"/><rect x="596" y="298" width="1" height="1"/><rect x="589" y="373" width="1" height="1"/><rect x="595" y="384" width="1" height="1"/><rect x="539" y="361" width="1" height="1"/><rect x="601" y="412" width="1" height="1"/><rect x="581" y="363" width="1" height="1"/><rect x="540" y="389" width="1" height="1"/><rect x="556" y="402" width="1" height="1"/><rect x="565" y="293" width="1" height="1"/><rect x="552" y="401" width="1" height="1"/><rect x="622" y="402" width="1" height="1"/><rect x="569" y="362" width="1" height="1"/><rect x="593" y="360" width="1" height="1"/><rect x="589" y="407" width="1" height="1"/><rect x="541" y="386" width="1" height="1"/><rect x="565" y="305" width="1" height="1"/><rect x="561" y="403" width="1" height="1"/><rect x="538" y="374" width="1" height="1"/><rect x="565" y="291" width="1" height="1"/><rect x="596" y="391" width="1" height="1"/><rect x="560" y="392" width="1" height="1"/><rect x="576" y="366" width="1" height="1"/><rect x="549" y="357" width="1" height="1"/><rect x="555" y="428" width="1" height="1"/><rect x="609" y="441" width="1" height="1"/><rect x="576" y="284" width="1" height="1"/><rect x="620" y="415" width="1" height="1"/><rect x="561" y="355" width="1" height="1"/><rect x="604" y="315" width="1" height="1"/><rect x="583" y="316" width="1" height="1"/><rect x="580" y="304" width="1" height="1"/><rect x="555" y="437" width="1" height="1"/><rect x="580" y="416" width="1" height="1"/><rect x="596" y="426" width="1" height="1"/><rect x="602" y="319" width="1" height="1"/><rect x="541" y="361" width="1" height="1"/><rect x="578" y="282" width="1" height="1"/><rect x="564" y="355" width="1" height="1"/><rect x="570" y="304" width="1" height="1"/><rect x="600" y="333" width="1" height="1"/><rect x="591" y="281" width="1" height="1"/><rect x="546" y="419" width="1" height="1"/><rect x="596" y="433" width="1" height="1"/><rect x="563" y="429" width="1" height="1"/><rect x="571" y="342" width="1" height="1"/><rect x="582" y="445" width="1" height="1"/><rect x="574" y="340" width="1" height="1"/><rect x="551" y="326" width="1" height="1"/><rect x="596" y="298" width="1" height="1"/><rect x="605" y="328" width="1" height="1"/><rect x="565" y="322" width="1" height="1"/><rect x="554" y="365" width="1" height="1"/><rect x="610" y="342" width="1" height="1"/><rect x="605" y="426" width="1" height="1"/><rect x="616" y="384" width="1" height="1"/><rect x="584" y="435" width="1" height="1"/><rect x="538" y="399" width="1" height="1"/><rect x="574" y="401" width="1" height="1"/><rect x="592" y="404" width="1" height="1"/><rect x="551" y="328" width="1" height="1"/><rect x="552" y="433" width="1" height="1"/><rect x="566" y="358" width="1" height="1"/><rect x="594" y="330" width="1" height="1"/><rect x="565" y="441" width="1" height="1"/><rect x="561" y="389" width="1" height="1"/><rect x="570" y="372" width="1" height="1"/><rect x="560" y="308" width="1" height="1"/><rect x="602" y="315" width="1" height="1"/><rect x="556" y="363" width="1" height="1"/><rect x="619" y="430" width="1" height="1"/><rect x="551" y="355" width="1" height="1"/><rect x="555" y="313" width="1" height="1"/><rect x="551" y="337" width="1" height="1"/><rect x="564" y="320" width="1" height="1"/><rect x="612" y="374" width="1" height="1"/><rect x="570" y="404" width="1" height="1"/><rect x="580" y="349" width="1" height="1"/><rect x="567" y="343" width="1" height="1"/><rect x="566" y="291" width="1" height="1"/><rect x="555" y="440" width="1" height="1"/><rect x="589" y="364" width="1" height="1"/><rect x="555" y="423" width="1" height="1"/><rect x="563" y="325" width="1" height="1"/><rect x="575" y="347" width="1" height="1"/><rect x="604" y="437" width="1" height="1"/><rect x="539" y="424" width="1" height="1"/><rect x="589" y="286" width="1" height="1"/><rect x="578" y="428" width="1" height="1"/><rect x="536" y="377" width="1" height="1"/><rect x="609" y="345" width="1" height="1"/><rect x="610" y="416" width="1" height="1"/><rect x="564" y="440" width="1" height="1"/><rect x="559" y="299" width="1" height="1"/><rect x="593" y="367" width="1" height="1"/><rect x="596" y="435" width="1" height="1"/><rect x="603" y="387" width="1" height="1"/><rect x="582" y="356" width="1" height="1"/><rect x="593" y="287" width="1" height="1"/><rect x="603" y="319" width="1" height="1"/><rect x="561" y="387" width="1" height="1"/><rect x="565" y="302" width="1" height="1"/><rect x="597" y="385" width="1" height="1"/><rect x="555" y="299" width="1" height="1"/><rect x="585" y="367" width="1" height="1"/><rect x="559" y="345" width="1" height="1"/><rect x="536" y="380" width="1" height="1"/><rect x="576" y="330" width="1" height="1"/><rect x="590" y="438" width="1" height="1"/><rect x="578" y="426" width="1" height="1"/><rect x="564" y="320" width="1" height="1"/><rect x="594" y="439" width="1" height="1"/><rect x="548" y="331" width="1" height="1"/><rect x="592" y="363" width="1" height="1"/><rect x="561" y="350" width="1" height="1"/><rect x="617" y="390" width="1" height="1"/><rect x="551" y="318" width="1" height="1"/><rect x="573" y="336" width="1" height="1"/><rect x="552" y="393" width="1" height="1"/><rect x="600" y="412" width="1" height="1"/><rect x="555" y="364" width="1" height="1"/><rect x="568" y="440" width="1" height="1"/><rect x="555" y="415" width="1" height="1"/><rect x="594" y="317" width="1" height="1"/><rect x="607" y="329" width="1" height="1"/><rect x="554" y="362" width="1" height="1"/><rect x="574" y="318" width="1" height="1"/><rect x="619" y="390" width="1" height="1"/><rect x="573" y="305" width="1" height="1"/><rect x="606" y="316" width="1" height="1"/><rect x="554" y="304" width="1" height="1"/><rect x="572" y="291" width="1" height="1"/><rect x="611" y="428" width="1" height="1"/><rect x="624" y="401" width="1" height="1"/><rect x="567" y="434" width="1" height="1"/><rect x="603" y="311" width="1" height="1"/><rect x="535" y="403" width="1" height="1"/><rect x="568" y="390" width="1" height="1"/><rect x="567" y="342" width="1" height="1"/><rect x="551" y="309" width="1" height="1"/><rect x="569" y="327" width="1" height="1"/><rect x="554" y="438" width="1" height="1"/><rect x="561" y="439" width="1" height="1"/><rect x="600" y="339" width="1" height="1"/><rect x="573" y="416" width="1" height="1"/><rect x="576" y="289" width="1" height="1"/><rect x="607" y="342" width="1" height="1"/><rect x="571" y="313" width="1" height="1"/><rect x="542" y="428" width="1" height="1"/><rect x="601" y="348" width="1" height="1"/><rect x="537" y="407" width="1" height="1"/><rect x="554" y="287" width="1" height="1"/><rect x="561" y="432" width="1" height="1"/><rect x="615" y="404" width="1" height="1"/><rect x="563" y="337" width="1" height="1"/><rect x="588" y="438" width="1" height="1"/><rect x="592" y="324" width="1" height="1"/><rect x="564" y="333" width="1" height="1"/><rect x="591" y="282" width="1" height="1"/><rect x="590" y="431" width="1" height="1"/><rect x="546" y="436" width="1" height="1"/><rect x="577" y="319" width="1" height="1"/><rect x="611" y="438" width="1" height="1"/><rect x="561" y="344" width="1" height="1"/><rect x="578" y="352" width="1" height="1"/><rect x="556" y="433" width="1" height="1"/><rect x="600" y="413" width="1" height="1"/><rect x="603" y="416" width="1" height="1"/><rect x="564" y="381" width="1" height="1"/><rect x="570" y="333" width="1" height="1"/><rect x="541" y="409" width="1" height="1"/><rect x="593" y="313" width="1" height="1"/><rect x="553" y="322" width="1" height="1"/><rect x="580" y="287" width="1" height="1"/><rect x="610" y="334" width="1" height="1"/><rect x="620" y="426" width="1" height="1"/><rect x="553" y="324" width="1" height="1"/><rect x="578" y="297" width="1" height="1"/><rect x="574" y="397" width="1" height="1"/><rect x="574" y="319" width="1" height="1"/><rect x="594" y="383" width="1" height="1"/><rect x="610" y="404" width="1" height="1"/><rect x="545" y="390" width="1" height="1"/><rect x="561" y="419" width="1" height="1"/><rect x="568" y="374" width="1" height="1"/><rect x="551" y="402" width="1" height="1"/><rect x="563" y="322" width="1" height="1"/></g>
<g fill="#4a808a" opacity="0.8"><rect x="571.4" y="317.1" width="1.1" height="1.6" opacity="0.82"/><rect x="578.9" y="317.4" width="1.1" height="1.5" opacity="0.57"/><rect x="581.2" y="316.7" width="1.1" height="2.0" opacity="0.74"/><rect x="583.6" y="316.9" width="1.1" height="2.1" opacity="0.46"/><rect x="586.4" y="317.8" width="1.1" height="2.0" opacity="0.39"/><rect x="589.1" y="317.3" width="1.1" height="2.1" opacity="0.40"/><rect x="563.5" y="327.6" width="1.1" height="1.6" opacity="0.53"/><rect x="568.6" y="327.5" width="1.1" height="1.8" opacity="0.87"/><rect x="573.5" y="328.3" width="1.1" height="1.5" opacity="0.35"/><rect x="581.7" y="327.6" width="1.1" height="2.4" opacity="0.63"/><rect x="583.6" y="327.9" width="1.1" height="2.1" opacity="0.90"/><rect x="586.7" y="327.5" width="1.1" height="1.9" opacity="0.44"/><rect x="589.2" y="328.7" width="1.1" height="1.4" opacity="0.64"/><rect x="568.2" y="339.3" width="1.1" height="2.6" opacity="0.64"/><rect x="571.4" y="338.2" width="1.1" height="2.5" opacity="0.72"/><rect x="579.0" y="337.8" width="1.1" height="1.8" opacity="0.86"/><rect x="583.8" y="338.2" width="1.1" height="1.9" opacity="0.58"/><rect x="586.4" y="338.8" width="1.1" height="2.5" opacity="0.37"/><rect x="566.2" y="348.2" width="1.1" height="2.0" opacity="0.68"/><rect x="571.0" y="349.2" width="1.1" height="1.8" opacity="0.75"/><rect x="573.7" y="348.0" width="1.1" height="2.1" opacity="0.64"/><rect x="579.0" y="349.6" width="1.1" height="1.8" opacity="0.46"/><rect x="581.1" y="348.3" width="1.1" height="1.8" opacity="0.41"/><rect x="584.0" y="348.1" width="1.1" height="2.1" opacity="0.40"/><rect x="565.9" y="359.4" width="1.1" height="2.5" opacity="0.43"/><rect x="581.8" y="359.6" width="1.1" height="2.5" opacity="0.90"/><rect x="584.2" y="360.5" width="1.1" height="1.3" opacity="0.56"/><rect x="589.5" y="359.1" width="1.1" height="2.3" opacity="0.44"/><rect x="568.3" y="370.2" width="1.1" height="1.6" opacity="0.37"/><rect x="570.8" y="371.1" width="1.1" height="2.2" opacity="0.89"/><rect x="573.9" y="369.4" width="1.1" height="1.9" opacity="0.73"/><rect x="579.1" y="370.3" width="1.1" height="2.0" opacity="0.88"/><rect x="581.8" y="370.5" width="1.1" height="1.8" opacity="0.83"/><rect x="584.4" y="370.4" width="1.1" height="1.7" opacity="0.81"/><rect x="586.3" y="370.7" width="1.1" height="1.3" opacity="0.84"/><rect x="589.3" y="371.2" width="1.1" height="2.0" opacity="0.75"/><rect x="562.9" y="379.9" width="1.1" height="1.4" opacity="0.72"/><rect x="565.9" y="381.6" width="1.1" height="1.4" opacity="0.49"/><rect x="570.7" y="380.5" width="1.1" height="1.3" opacity="0.56"/><rect x="573.8" y="381.0" width="1.1" height="1.5" opacity="0.72"/><rect x="578.5" y="381.7" width="1.1" height="1.5" opacity="0.44"/><rect x="581.5" y="381.5" width="1.1" height="2.3" opacity="0.59"/><rect x="583.6" y="381.1" width="1.1" height="2.0" opacity="0.56"/><rect x="589.5" y="381.3" width="1.1" height="1.5" opacity="0.89"/><rect x="563.3" y="391.2" width="1.1" height="1.5" opacity="0.39"/><rect x="568.5" y="392.3" width="1.1" height="1.4" opacity="0.47"/><rect x="583.8" y="391.0" width="1.1" height="1.3" opacity="0.88"/><rect x="563.6" y="402.5" width="1.1" height="1.9" opacity="0.80"/><rect x="565.7" y="401.2" width="1.1" height="1.5" opacity="0.37"/><rect x="568.7" y="402.4" width="1.1" height="2.4" opacity="0.78"/><rect x="571.1" y="401.9" width="1.1" height="2.3" opacity="0.66"/><rect x="573.8" y="402.9" width="1.1" height="1.5" opacity="0.88"/><rect x="578.6" y="401.5" width="1.1" height="2.2" opacity="0.92"/><rect x="584.3" y="401.7" width="1.1" height="1.5" opacity="0.89"/><rect x="568.8" y="413.0" width="1.1" height="2.4" opacity="0.61"/><rect x="578.6" y="412.8" width="1.1" height="1.3" opacity="0.90"/><rect x="581.0" y="411.8" width="1.1" height="2.5" opacity="0.56"/><rect x="583.6" y="411.7" width="1.1" height="2.2" opacity="0.73"/><rect x="563.4" y="422.9" width="1.1" height="2.3" opacity="0.84"/><rect x="568.8" y="424.0" width="1.1" height="2.5" opacity="0.41"/><rect x="570.8" y="422.3" width="1.1" height="2.4" opacity="0.84"/><rect x="583.7" y="422.4" width="1.1" height="2.3" opacity="0.47"/><rect x="586.5" y="422.2" width="1.1" height="1.6" opacity="0.52"/></g>
</svg>
<div class="hatch" style="left:1336px;top:34px;width:66px"></div><div class="hatch" style="left:1496px;top:34px;width:64px"></div><div class="title" style="left:1412.0px;top:32px;font-size:9.9px">Property editor</div><div class="tb" style="left:1562.5px;top:30.5px"><svg width="11" height="11" viewBox="0 0 11 11"><path d="M3.5 1.5h6v5h-2.5M1.5 4.5h5.5v5h-5.5z" fill="none" stroke="#0a0a0a" stroke-width="1.2"/><path d="M3.5 2h6M1.5 5h5.5" stroke="#0a0a0a" stroke-width="1.6"/></svg></div><div class="tb" style="left:1576.5px;top:30.5px"><svg width="11" height="11" viewBox="0 0 11 11"><path d="M2 2l7 7M9 2l-7 7" stroke="#0a0a0a" stroke-width="1.5"/></svg></div>
<div class="t" style="left:1334.5px;top:49px;letter-spacing:.12px">selected node: MoveObject22</div>
<div class="frame" style="left:1334px;top:69px;width:257px;height:462px;background:#2f2f2f"></div>
<i class="arrD" style="left:1350px;top:90px"></i>
<div class="t" style="left:1366.5px;top:86px">Other Properties</div>
<div class="t" style="left:1356px;top:115px">name</div>
<div class="t" style="left:1356px;top:140px">displacement</div>
<div class="t" style="left:1356px;top:166px">x</div>
<div class="t" style="left:1356px;top:190px">y</div>
<div class="t" style="left:1356px;top:214px">z</div>
<div class="field" style="top:111px">LightInstance</div>
<div class="field" style="top:162px">0</div>
<div class="field" style="top:186px">5.231022</div>
<div class="field" style="top:210px">0</div>
<div class="abs" style="left:1550px;top:135px;width:20px;height:25px;background:#3e3e3e;border:1px solid #242424;border-radius:3px;line-height:23px;text-align:center;font-size:10.5px;letter-spacing:0;padding-left:1px">K</div>
<div class="abs" style="left:1420px;top:533px;width:82px;height:3.5px;background:repeating-linear-gradient(45deg,#1f1f1f 0 1.6px,transparent 1.6px 4px)"></div>
<div class="hatch" style="left:1336px;top:544px;width:86px"></div><div class="hatch" style="left:1475px;top:544px;width:84px"></div><div class="title" style="left:1432.5px;top:542px;font-size:9.1px">Outline</div><div class="tb" style="left:1562.5px;top:540.5px"><svg width="11" height="11" viewBox="0 0 11 11"><path d="M3.5 1.5h6v5h-2.5M1.5 4.5h5.5v5h-5.5z" fill="none" stroke="#0a0a0a" stroke-width="1.2"/><path d="M3.5 2h6M1.5 5h5.5" stroke="#0a0a0a" stroke-width="1.6"/></svg></div><div class="tb" style="left:1576.5px;top:540.5px"><svg width="11" height="11" viewBox="0 0 11 11"><path d="M2 2l7 7M9 2l-7 7" stroke="#0a0a0a" stroke-width="1.5"/></svg></div>
<div class="abs" style="left:1334.5px;top:560px;width:257px;height:361px;background:#201f1e;border:2px solid #36507c;border-radius:2px;box-shadow:inset 0 0 0 1px #1b2a45"></div>
<div class="abs" style="left:1337px;top:562px;width:252.5px;height:22px;background:linear-gradient(#403e3c,#353332);border-bottom:1px solid #1c1c1c"></div>
<div class="t" style="left:1341px;top:566px">Objects</div>
<div class="abs" style="left:1357px;top:585px;width:231px;height:16px;border:1px dotted #ddd"></div>
<div class="abs" style="left:1346px;top:584px;width:1px;height:136px;border-left:1px dotted #999"></div>
<div class="abs" style="left:1343px;top:592px;width:5px;height:1px;background:#a8a8a8"></div><div class="abs" style="left:1345px;top:590px;width:1px;height:5px;background:#a8a8a8"></div><div class="abs" style="left:1350px;top:592px;width:5px;height:1px;border-top:1px dotted #999"></div>
<div class="oi" style="top:585px">PlaneInstance</div>
<div class="abs" style="left:1343px;top:608px;width:5px;height:1px;background:#a8a8a8"></div><div class="abs" style="left:1345px;top:606px;width:1px;height:5px;background:#a8a8a8"></div><div class="abs" style="left:1350px;top:608px;width:5px;height:1px;border-top:1px dotted #999"></div>
<div class="oi" style="top:601px">PlaneInstance</div>
<div class="abs" style="left:1343px;top:624px;width:5px;height:1px;background:#a8a8a8"></div><div class="abs" style="left:1345px;top:622px;width:1px;height:5px;background:#a8a8a8"></div><div class="abs" style="left:1350px;top:624px;width:5px;height:1px;border-top:1px dotted #999"></div>
<div class="oi" style="top:617px">PlaneInstance</div>
<div class="abs" style="left:1343px;top:640px;width:5px;height:1px;background:#a8a8a8"></div><div class="abs" style="left:1345px;top:638px;width:1px;height:5px;background:#a8a8a8"></div><div class="abs" style="left:1350px;top:640px;width:5px;height:1px;border-top:1px dotted #999"></div>
<div class="oi" style="top:633px">LightInstance</div>
<div class="abs" style="left:1343px;top:656px;width:5px;height:1px;background:#a8a8a8"></div><div class="abs" style="left:1345px;top:654px;width:1px;height:5px;background:#a8a8a8"></div><div class="abs" style="left:1350px;top:656px;width:5px;height:1px;border-top:1px dotted #999"></div>
<div class="oi" style="top:649px">CylinderInstance</div>
<div class="abs" style="left:1343px;top:672px;width:5px;height:1px;background:#a8a8a8"></div><div class="abs" style="left:1345px;top:670px;width:1px;height:5px;background:#a8a8a8"></div><div class="abs" style="left:1350px;top:672px;width:5px;height:1px;border-top:1px dotted #999"></div>
<div class="oi" style="top:665px">CylinderInstance</div>
<div class="abs" style="left:1343px;top:688px;width:5px;height:1px;background:#a8a8a8"></div><div class="abs" style="left:1345px;top:686px;width:1px;height:5px;background:#a8a8a8"></div><div class="abs" style="left:1350px;top:688px;width:5px;height:1px;border-top:1px dotted #999"></div>
<div class="oi" style="top:681px">CameraInstance</div>
<div class="abs" style="left:1343px;top:704px;width:5px;height:1px;background:#a8a8a8"></div><div class="abs" style="left:1345px;top:702px;width:1px;height:5px;background:#a8a8a8"></div><div class="abs" style="left:1350px;top:704px;width:5px;height:1px;border-top:1px dotted #999"></div>
<div class="oi" style="top:697px">Group</div>
<div class="abs" style="left:1343px;top:720px;width:5px;height:1px;background:#a8a8a8"></div><div class="abs" style="left:1345px;top:718px;width:1px;height:5px;background:#a8a8a8"></div><div class="abs" style="left:1350px;top:720px;width:5px;height:1px;border-top:1px dotted #999"></div>
<div class="oi" style="top:713px">Camera2Instance</div>
<div class="abs" style="left:530px;top:923.3px;width:530px;height:3.5px;background:repeating-linear-gradient(45deg,#1f1f1f 0 1.6px,transparent 1.6px 4px)"></div>
<div class="hatch" style="left:4px;top:934px;width:747px"></div><div class="hatch" style="left:810px;top:934px;width:749px"></div><div class="title" style="left:761.5px;top:932px;font-size:9.2px">Timeline</div><div class="tb" style="left:1562.5px;top:930.5px"><svg width="11" height="11" viewBox="0 0 11 11"><path d="M3.5 1.5h6v5h-2.5M1.5 4.5h5.5v5h-5.5z" fill="none" stroke="#0a0a0a" stroke-width="1.2"/><path d="M3.5 2h6M1.5 5h5.5" stroke="#0a0a0a" stroke-width="1.6"/></svg></div><div class="tb" style="left:1576.5px;top:930.5px"><svg width="11" height="11" viewBox="0 0 11 11"><path d="M2 2l7 7M9 2l-7 7" stroke="#0a0a0a" stroke-width="1.5"/></svg></div>
<div class="abs" style="left:1407px;top:975px;width:184px;height:21px;background:#3d3b3a;border:1px solid #242424;border-radius:3px"></div>
<div class="abs" style="left:1575px;top:976px;width:1px;height:19px;background:#282828"></div>
<i class="abs" style="left:1579px;top:983px;border-left:4px solid transparent;border-right:4px solid transparent;border-top:5px solid #eee"></i>
<div class="mbtn" style="left:1407px"><svg width="28" height="23" viewBox="0.5 0.5 28 23"><path d="M7 6v12M8 12l7-6v12zM15 12l7-6v12z" fill="#050505" stroke="#050505" stroke-width="1.4"/></svg></div>
<div class="mbtn" style="left:1438px"><svg width="28" height="23" viewBox="0.5 0.5 28 23"><path d="M10 6v12" stroke="#050505" stroke-width="2"/><path d="M11 12l8-6v12z" fill="#050505"/></svg></div>
<div class="mbtn" style="left:1469px"><svg width="28" height="23" viewBox="0.5 0.5 28 23"><path d="M10 6l9 6-9 6z" fill="#050505"/></svg></div>
<div class="mbtn" style="left:1500px"><svg width="28" height="23" viewBox="0.5 0.5 28 23"><rect x="9" y="7" width="10" height="10" fill="#353535"/></svg></div>
<div class="mbtn" style="left:1531px"><svg width="28" height="23" viewBox="0.5 0.5 28 23"><path d="M19 6v12" stroke="#050505" stroke-width="2"/><path d="M18 12l-8-6v12z" fill="#050505"/></svg></div>
<div class="mbtn" style="left:1562px"><svg width="28" height="23" viewBox="0.5 0.5 28 23"><path d="M22 6v12M21 12l-7-6v12zM14 12l-7-6v12z" fill="#050505" stroke="#050505" stroke-width="1.4"/></svg></div>
<div class="abs" style="left:0;top:1077px;width:1592px;height:1px;background:#1e1e1e"></div>
<div class="tab" style="left:2px;top:1079px;width:42px;height:19px;border-radius:0 0 3px 3px;border-top:none;line-height:21px">Log</div>
<div class="tab" style="left:44px;top:1077px;width:69px;height:23px;border-radius:0 0 3px 3px;border-top:none;background:#2f2f2f;line-height:23px">Timeline</div>
<div class="tab" style="left:114px;top:1079px;width:124px;height:19px;border-radius:0 0 3px 3px;border-top:none;line-height:21px">Background tasks</div>
<svg class="abs" style="left:1578px;top:1108px" width="14" height="14" viewBox="0 0 14 14"><path d="M2 14L14 2M5 14L14 5M8 14L14 8M11 14L14 11" stroke="#eee" stroke-width="1.2"/></svg>
</div></body></html>
